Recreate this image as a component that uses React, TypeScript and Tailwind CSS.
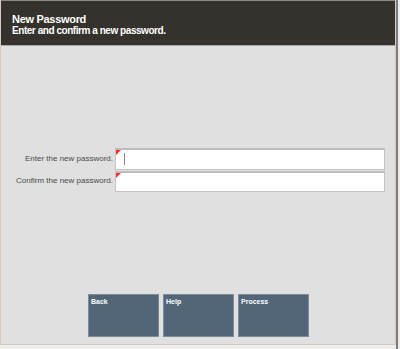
export default function App() {
    return (
        <div
            className="w-[400px] h-[349px] flex bg-[#ececec] overflow-hidden"
            style={{ fontFamily: '"Liberation Sans", Arial, sans-serif' }}
        >
            <div className="w-[398px] h-[349px] border-r-2 border-[#7c7c7c] flex flex-col">
                <div className="h-[345px] flex flex-col bg-[#e0e0e0] border-x border-b border-[#d5cbc2]">
                    {/* Header */}
                    <div className="h-[46px] bg-[#35322d] border-t border-[#8a8a8a] border-b border-b-[#a9a9a9] px-[11px] pt-[12px] text-white font-bold">
                        <div className="text-[11px] leading-[12px] tracking-[-0.3px]">New Password</div>
                        <div className="text-[10px] leading-[12px] tracking-[-0.45px]">
                            Enter and confirm a new password.
                        </div>
                    </div>

                    {/* Fields */}
                    <div className="flex-1 flex flex-col pt-[101px] pr-[10px]">
                        <div className="flex items-center h-[23px]">
                            <label className="w-[114px] pr-[2px] text-right text-[8px] text-[#4a4a4a]">
                                Enter the new password.
                            </label>
                            <div className="relative flex-1 h-[22px] bg-white border border-[#c4c4c4] border-t-2 border-t-[#bdbdbd]">
                                <div className="absolute top-0 left-0 w-0 h-0 border-t-[5px] border-r-[5px] border-t-[#ff2a2a] border-r-transparent" />
                                <div className="absolute top-[3px] left-[8px] w-px h-[12px] bg-[#888]" />
                            </div>
                        </div>
                        <div className="flex items-center h-[22px]">
                            <label className="w-[114px] pr-[2px] text-right text-[8px] text-[#4a4a4a]">
                                Confirm the new password.
                            </label>
                            <div className="relative flex-1 h-[21px] bg-white border border-[#c4c4c4] border-t-2 border-t-[#bdbdbd]">
                                <div className="absolute top-0 left-0 w-0 h-0 border-t-[5px] border-r-[5px] border-t-[#ff2a2a] border-r-transparent" />
                            </div>
                        </div>
                    </div>

                    {/* Buttons */}
                    <div className="flex gap-[4px] pl-[87px] pb-[7px]">
                        {["Back", "Help", "Process"].map((label) => (
                            <div
                                key={label}
                                className="w-[71px] h-[43px] bg-[#536579] border border-[#7d8a98] px-[2px] pt-[3px] text-white text-[7px] font-bold leading-[8px]"
                            >
                                {label}
                            </div>
                        ))}
                    </div>
                </div>
            </div>
        </div>
    );
}
